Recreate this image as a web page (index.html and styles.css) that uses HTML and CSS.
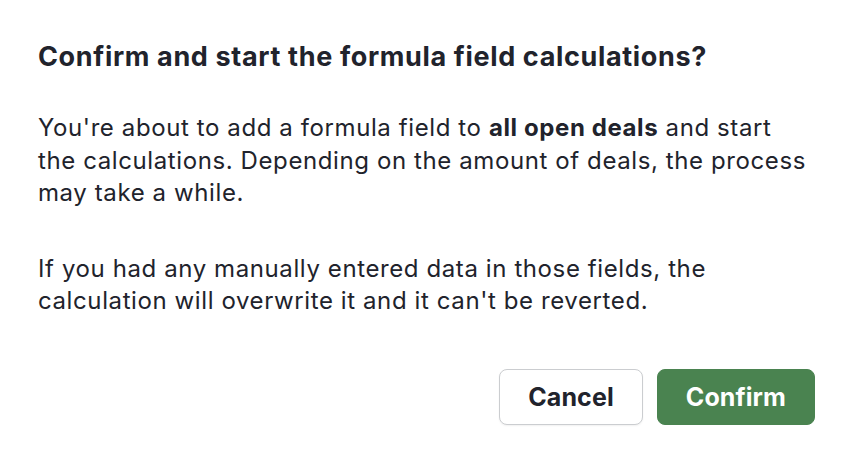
FILE: index.html
```html
<!DOCTYPE html>
<html>
<head>
<meta charset="utf-8">
<link rel="stylesheet" href="styles.css">
</head>
<body>
<div class="dialog">
  <h1 class="title">Confirm and start the formula field calculations?</h1>
  <p class="text">You're about to add a formula field to <b>all open deals</b> and start the calculations. Depending on the amount of deals, the process may take a while.</p>
  <p class="text">If you had any manually entered data in those fields, the calculation will overwrite it and it can't be reverted.</p>
  <div class="actions">
    <button class="btn btn-secondary">Cancel</button>
    <button class="btn btn-primary">Confirm</button>
  </div>
</div>
</body>
</html>
```
FILE: styles.css
```css
html, body {
  margin: 0;
  padding: 0;
  background: #ffffff;
}
body {
  font-family: Inter, "Noto Sans", sans-serif;
  color: #21232c;
  width: 846px;
  height: 464px;
  overflow: hidden;
}
.dialog {
  padding: 39px 31px 0 38px;
}
.title {
  margin: 0;
  font-size: 27px;
  line-height: 36px;
  font-weight: 700;
  letter-spacing: 0.65px;
}
.text {
  margin: 37px 0 0 0;
  font-size: 24px;
  line-height: 32.5px;
  font-weight: 400;
  letter-spacing: 0.6px;
  max-width: 774px;
}
.text + .text {
  margin-top: 43px;
}
.text b {
  font-weight: 700;
}
.actions {
  display: flex;
  justify-content: flex-end;
  gap: 14px;
  margin-top: 51px;
}
.btn {
  font-family: inherit;
  height: 56px;
  border-radius: 8px;
  font-size: 25px;
  font-weight: 700;
  letter-spacing: 0.1px;
  padding: 0 28px;
  cursor: pointer;
}
.btn-secondary {
  background: #ffffff;
  color: #21232c;
  border: 1px solid #cbcdd0;
  box-shadow: 0 1px 2px rgba(0,0,0,0.06);
}
.btn-primary {
  background: #4a8350;
  color: #ffffff;
  border: 1px solid #4a8350;
}
```
